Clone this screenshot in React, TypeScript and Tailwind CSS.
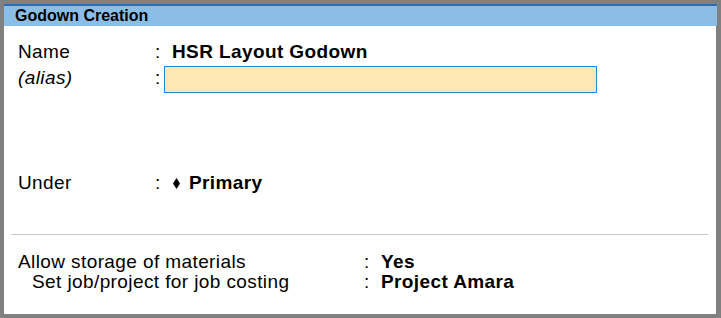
import React from "react";

const font = { fontFamily: '"Liberation Sans", Arial, sans-serif' };

export default function App() {
  return (
    <div
      className="w-[721px] h-[318px] bg-[#808080] pt-[4px] pl-[4px] pr-[5px] pb-[4px] text-black"
      style={font}
    >
      <div className="h-full bg-white flex flex-col">
        <div className="border-t-2 border-[#2e6cb8] bg-[#8bbee6] h-[22px] flex items-center pl-[11px] mr-[-1px]">
          <span className="text-[16px] font-bold leading-[18px]">Godown Creation</span>
        </div>
        <div className="flex flex-col pl-[14px] text-[19px] leading-[20px] tracking-[0.4px]">
          <div className="flex mt-[16px] h-[20px]">
            <span className="w-[137px]">Name</span>
            <span className="w-[9px]">:</span>
            <span className="ml-[8px] font-bold">HSR Layout Godown</span>
          </div>
          <div className="flex mt-[4px] h-[27px] items-start">
            <span className="w-[137px] italic mt-[2px]">(alias)</span>
            <span className="w-[9px] mt-[2px]">:</span>
            <div className="w-[433px] h-[27px] border border-[#1b8bd6] bg-[#fde7b2]" />
          </div>
          <div className="flex mt-[80px] h-[20px] items-center">
            <span className="w-[137px]">Under</span>
            <span className="w-[9px]">:</span>
            <svg className="ml-[9px]" width="7" height="11" viewBox="0 0 7 11">
              <polygon points="3.5,0 7,5.5 3.5,11 0,5.5" fill="#000" />
            </svg>
            <span className="ml-[9px] font-bold">Primary</span>
          </div>
          <div className="mt-[41px] h-px bg-[#c8c8c8] ml-[-7px] mr-[8px]" />
          <div className="flex mt-[17px] h-[20px]">
            <span className="w-[346px]">Allow storage of materials</span>
            <span className="w-[17px]">:</span>
            <span className="font-bold">Yes</span>
          </div>
          <div className="flex h-[20px]">
            <span className="w-[346px] pl-[14px]">Set job/project for job costing</span>
            <span className="w-[17px]">:</span>
            <span className="font-bold">Project Amara</span>
          </div>
        </div>
      </div>
    </div>
  );
}
